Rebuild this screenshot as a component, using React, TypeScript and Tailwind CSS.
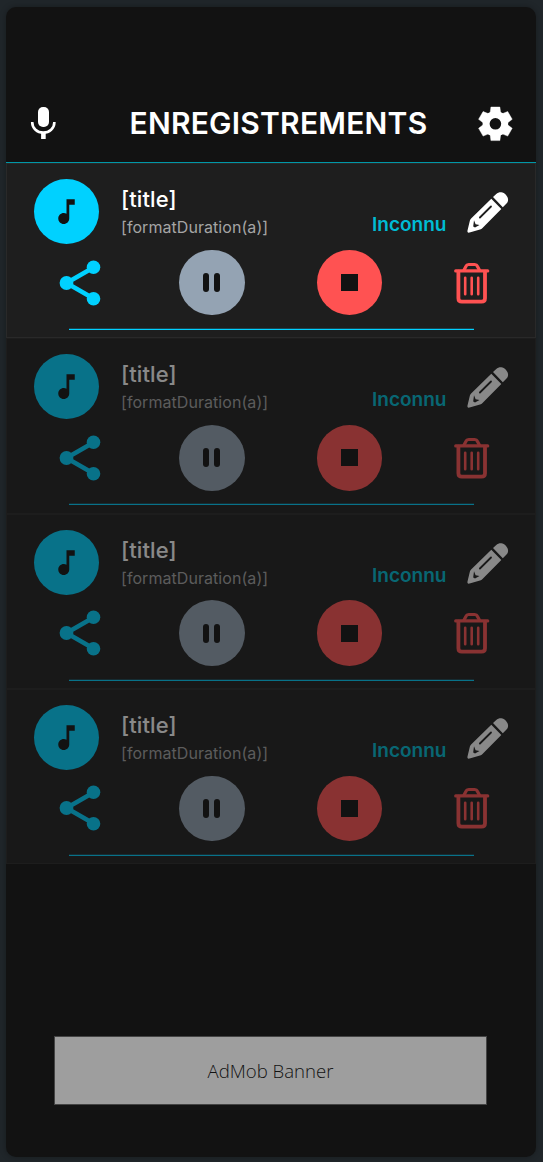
import { MdMusicNote } from 'react-icons/md';

// TODO: load from storage
const recordings = [
  { id: '1', title: '[title]', duration: '[formatDuration(a)]', tag: 'Inconnu', active: true },
  { id: '2', title: '[title]', duration: '[formatDuration(a)]', tag: 'Inconnu', active: false },
  { id: '3', title: '[title]', duration: '[formatDuration(a)]', tag: 'Inconnu', active: false },
  { id: '4', title: '[title]', duration: '[formatDuration(a)]', tag: 'Inconnu', active: false },
];

type Recording = (typeof recordings)[number];

function MicIcon() {
  return (
    <svg viewBox="0 0 26 34" className="w-[26px] h-[34px]" fill="none">
      <rect x="8" y="1" width="11" height="20" rx="5" fill="#fff" />
      <path d="M2.2 16c0 6.5 5 10.6 11.1 10.6S24.4 22.5 24.4 16" stroke="#fff" strokeWidth="2.6" />
      <path d="M13.4 26v7" stroke="#fff" strokeWidth="4.6" />
    </svg>
  );
}

function GearIcon() {
  return (
    <svg viewBox="-18.4 -17.8 36 36" className="w-[36px] h-[36px]">
      {[0, 60, 120, 180, 240, 300].map((angle) => (
        <path
          key={angle}
          d="M-4.5-16.8H4.5L5.2-11.5 6-9H-6L-5.2-11.5z"
          transform={`rotate(${angle})`}
          fill="#fff"
          stroke="#fff"
          strokeWidth="0.4"
          strokeLinejoin="round"
        />
      ))}
      <circle r="9.3" fill="none" stroke="#fff" strokeWidth="7" />
    </svg>
  );
}

function ShareIcon() {
  return (
    <svg viewBox="0 0 42 46" className="w-[42px] h-[46px]">
      <path d="M34.5 7.5 7.5 23l27 15.500" fill="none" stroke="#00d1ff" strokeWidth="4.5" />
      <circle cx="34.5" cy="7.3" r="6.8" fill="#00d1ff" />
      <circle cx="7.5" cy="23" r="6.9" fill="#00d1ff" />
      <circle cx="34.5" cy="38.7" r="6.8" fill="#00d1ff" />
    </svg>
  );
}

function PencilIcon() {
  return (
    <svg viewBox="0 0 42 42" className="w-[42px] h-[42px]">
      <path d="M26 5l3-2.8C30.8.6 32.3.2 34.3.3 37.5.6 41 4.5 41.1 7.5c0 1.800-.5 3-1.600 4L35.8 15.2z" fill="#fff" />
      <path
        d="M24.3 6.7 34.3 17.1 15.5 36q-1 1-2.5 1.600L2.6 40.5C.8 41 .1 40 .5 38.5L2.9 28.5q.3-1.200 1.200-2z"
        fill="#fff"
      />
      <path d="M12.9 25.5 24 14.5" stroke="#1e1e1e" strokeWidth="1.8" strokeLinecap="round" />
      <path d="M7 28.3 8.6 32.3 12.5 33 8 35.6 6.2 34.4z" fill="#1e1e1e" />
    </svg>
  );
}

function TrashIcon() {
  return (
    <svg viewBox="0.3 0.3 36 42" className="w-[36px] h-[42px]" fill="none" stroke="#ff5252" strokeLinecap="round">
      <path d="M2 9.2h32" strokeWidth="3.2" />
      <path d="M10.2 8.5 12.3 4.5Q13 2.8 15 2.8h6Q23 2.8 23.7 4.5L25.8 8.5" strokeWidth="3.2" />
      <path d="M4.7 10v26.5q0 3.4 3.5 3.4h19.6q3.5 0 3.5-3.4V10" strokeWidth="3.8" />
      <path d="M11.5 16v16.5M18 16v16.5M24.5 16v16.5" strokeWidth="2.6" />
    </svg>
  );
}

function RecordingCard({ recording }: { recording: Recording }) {
  return (
    <div
      className={`h-[175.33px] shrink-0 border border-[#292929] bg-[#1e1e1e] ${recording.active ? '' : 'opacity-50'}`}
    >
      {/* Title row */}
      <div className="flex h-[81px] pt-[15px] pl-[27px]">
        <div className="w-[65px] h-[65px] shrink-0 rounded-full bg-[#00d1ff] flex items-center justify-center">
          <MdMusicNote className="w-[33px] h-[33px] text-[#121212]" />
        </div>
        <div className="ml-[22px] w-[251px] pt-[7px]">
          <p className="text-[22px] leading-[26px] tracking-[0.1px] font-medium text-white">{recording.title}</p>
          <p className="mt-[5px] text-[16px] leading-5 tracking-[0.06px] text-[#a5a5a5]">{recording.duration}</p>
        </div>
        <p className="w-[74px] pt-[34px] text-[19px] leading-6 font-semibold text-[#00bcd4]">{recording.tag}</p>
        <button className="ml-[21px] h-[42px] mt-[13px]">
          <PencilIcon />
        </button>
      </div>

      {/* Controls */}
      <div className="flex items-center h-[75px] pt-[5px] pl-[52px] pb-[5px]">
        <button>
          <ShareIcon />
        </button>
        <button className="ml-[78.3px] w-[65.4px] h-[65.4px] rounded-full bg-[#94a3b3] flex items-center justify-center gap-[5px]">
          <span className="w-[6px] h-[19px] rounded-[3px] bg-[#121212]" />
          <span className="w-[6px] h-[19px] rounded-[3px] bg-[#121212]" />
        </button>
        <button className="ml-[72px] w-[65.4px] h-[65.4px] rounded-full bg-[#ff5252] flex items-center justify-center">
          <span className="w-[17px] h-[17px] bg-[#121212]" />
        </button>
        <button className="ml-[72px]">
          <TrashIcon />
        </button>
      </div>

      <div className="ml-[62px] mt-[8px] w-[405px] h-[2px] border-t border-[#1a4653] bg-[#00d1ff]" />
    </div>
  );
}

export default function App() {
  return (
    <div className="h-[1162px] w-[543px] bg-[#20262a] pt-[7px] pl-[6px] font-['Inter',sans-serif]">
      <div className="w-[530px] h-[1150px] rounded-[10px] bg-[#121212] flex flex-col overflow-hidden shadow-[0_0_6px_rgba(0,0,0,0.3)]">
        <header className="h-[156px] shrink-0 border-b border-[#0097a7] flex items-end pb-[21px] pl-[24px]">
          <div className="mb-px">
            <MicIcon />
          </div>
          <h1 className="ml-[73.5px] w-[321px] text-[30px] leading-[36px] tracking-[0.23px] font-semibold text-white whitespace-nowrap">
            ENREGISTREMENTS
          </h1>
          <button className="ml-[26.5px] -mb-px">
            <GearIcon />
          </button>
        </header>

        {recordings.map((recording) => (
          <RecordingCard key={recording.id} recording={recording} />
        ))}

        {/* Ad slot */}
        <div className="mt-[172px] ml-[48px] w-[433px] h-[69px] shrink-0 border border-[#444] bg-[#9e9e9e] flex items-center justify-center">
          <span className="font-['Open_Sans',sans-serif] text-[18.6px] font-light text-[#121212]">AdMob Banner</span>
        </div>
      </div>
    </div>
  );
}
